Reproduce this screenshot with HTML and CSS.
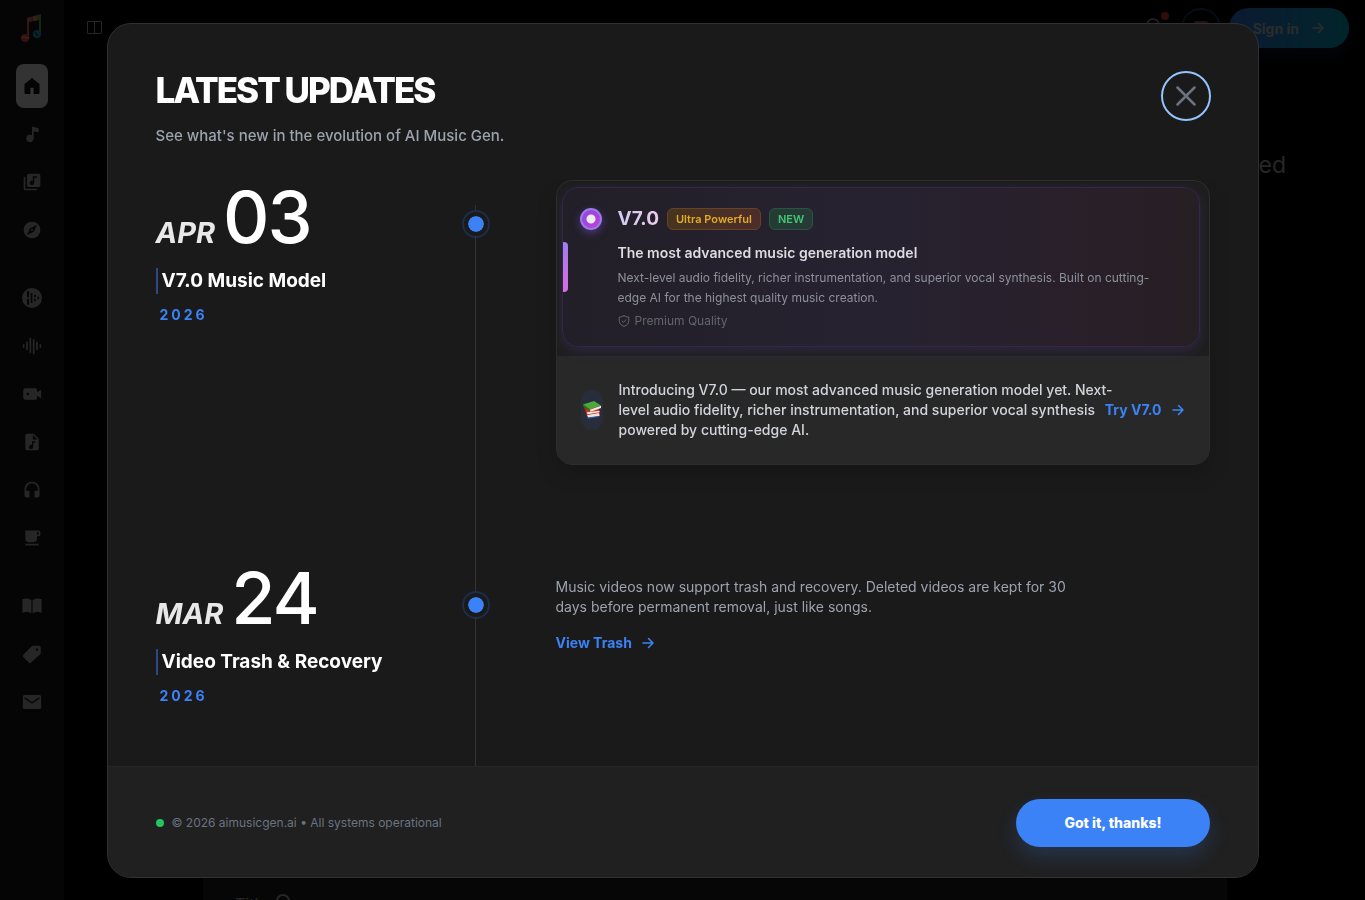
FILE: index.html
```html
<!DOCTYPE html>
<html lang="en">
<head>
    <meta charset="UTF-8">
    <meta name="viewport" content="width=device-width, initial-scale=1.0">
    <title>AI Music Gen</title>
    <link rel="stylesheet" href="styles.css">
</head>
<body>
    <div class="page">
        <nav class="sidebar" aria-label="Main">
            <a href="#" class="logo" aria-label="AI Music Gen">
                <svg width="24" height="32" viewBox="0 0 24 32">
                    <defs>
                        <linearGradient id="logo-fill" x1="0" y1="0.6" x2="1" y2="0.5">
                            <stop offset="0" stop-color="#ff4a9a"/>
                            <stop offset="0.2" stop-color="#ffa040"/>
                            <stop offset="0.4" stop-color="#e040b0"/>
                            <stop offset="0.6" stop-color="#d8e830"/>
                            <stop offset="0.8" stop-color="#ff8030"/>
                            <stop offset="1" stop-color="#30d890"/>
                        </linearGradient>
                    </defs>
                    <path d="M7 6l14-4v20h-2V8L9 10v15H7z" fill="url(#logo-fill)"/>
                    <circle cx="5" cy="26" r="4" fill="#ff5070"/>
                    <path d="M2 26c2-3 5 2 7-1" stroke="#ffc040" stroke-width="1.500" fill="none"/>
                    <circle cx="17" cy="22" r="4" fill="#24b4e0"/>
                    <path d="M15 20l3 4" stroke="#0a4a60" stroke-width="1.500"/>
                </svg>
            </a>
            <div class="nav-group">
                <a href="#" class="nav-item active" aria-label="Home"><svg viewBox="0 0 24 24"><path d="M12 2.500L3 9.500V20a1.500 1.500 0 0 0 1.500 1.500H10V14h4v7.500h5.500A1.500 1.500 0 0 0 21 20V9.500z"/></svg></a>
                <a href="#" class="nav-item" aria-label="Create"><svg viewBox="0 0 24 24"><path d="M12 3v10.600A4.500 4.500 0 1 0 14 17.400V9l6 1V5z"/></svg></a>
                <a href="#" class="nav-item" aria-label="Library"><svg viewBox="0 0 24 24"><path d="M8 2h12a2 2 0 0 1 2 2v12a2 2 0 0 1-2 2H8a2 2 0 0 1-2-2V4a2 2 0 0 1 2-2zm5 3v5.600A2.600 2.600 0 1 0 14.600 13V7H18V5zM2 6h2v14h14v2H4a2 2 0 0 1-2-2z" fill-rule="evenodd"/></svg></a>
                <a href="#" class="nav-item" aria-label="Explore"><svg viewBox="0 0 24 24"><path d="M12 2a10 10 0 1 0 0 20 10 10 0 0 0 0-20zm2.200 12.200L6 18l3.800-8.200L18 6zM12 10.900a1.100 1.100 0 1 0 0 2.200 1.100 1.100 0 0 0 0-2.200z" fill-rule="evenodd"/></svg></a>
            </div>
            <div class="nav-group">
                <a href="#" class="nav-item" aria-label="Mashup"><svg viewBox="0 0 24 24"><path fill-rule="evenodd" d="M12 0a12 12 0 1 0 0 24 12 12 0 0 0 0-24zM6 4h2.500v7H6zm0 9h2.500v7H6zM10.500 6h2v12h-2zm4 2h2v3h-2zm0 5h2v3h-2zm4-2.500h2v3h-2z"/></svg></a>
                <a href="#" class="nav-item" aria-label="Voices"><svg viewBox="0 0 24 24"><path d="M1 10h2v4H1zM5 7h2v10H5zM9 2h2v18H9zM13 4h2v18h-2zM17 7h2v10h-2zM21 10h2v4h-2z"/></svg></a>
                <a href="#" class="nav-item" aria-label="Video"><svg viewBox="0 0 24 24"><path fill-rule="evenodd" d="M4 5h12a2 2 0 0 1 2 2v3l5-3v10l-5-3v3a2 2 0 0 1-2 2H4a2.500 2.500 0 0 1-2.500-2.500v-9A2.500 2.500 0 0 1 4 5zm3 5.500a1.500 1.500 0 1 0 0 3 1.500 1.500 0 0 0 0-3z"/></svg></a>
                <a href="#" class="nav-item" aria-label="Lyrics"><svg viewBox="0 0 24 24"><path fill-rule="evenodd" d="M6 2h8l6 6v12a2 2 0 0 1-2 2H6a2 2 0 0 1-2-2V4a2 2 0 0 1 2-2zm7 1.500V9h5.500zM12 11v4.700A2.500 2.500 0 1 0 13.500 18v-5H16v-2z"/></svg></a>
                <a href="#" class="nav-item" aria-label="Listen"><svg viewBox="0 0 24 24"><path d="M12 2a9 9 0 0 0-9 9v8a2 2 0 0 0 2 2h4v-8H5v-2a7 7 0 0 1 14 0v2h-4v8h4a2 2 0 0 0 2-2v-8a9 9 0 0 0-9-9z"/></svg></a>
                <a href="#" class="nav-item" aria-label="Support us"><svg viewBox="0 0 24 24"><path fill-rule="evenodd" d="M4 3h16a2 2 0 0 1 2 2v3a2 2 0 0 1-2 2h-2v3a4 4 0 0 1-4 4H8a4 4 0 0 1-4-4zm14 2v3h2V5zM4 19h16v2H4z"/></svg></a>
            </div>
            <div class="nav-group">
                <a href="#" class="nav-item" aria-label="Blog"><svg viewBox="0 0 24 24"><path d="M.5 4C4 2.500 8 3 11.300 5v16C8 19 4 19 .5 20zM23.500 4C20 2.500 16 3 12.700 5v16c3.300-2 7.300-2 10.800-1z"/></svg></a>
                <a href="#" class="nav-item" aria-label="Pricing"><svg viewBox="0 0 24 24"><path fill-rule="evenodd" d="M13 2h7a2.500 2.500 0 0 1 2.500 2.500V11a2 2 0 0 1-.6 1.400L11 22.300a2 2 0 0 1-2.800 0l-6.500-6.500a2 2 0 0 1 0-2.800L11.600 2.600A2 2 0 0 1 13 2zm5 3a1.500 1.500 0 1 0 0 3 1.500 1.500 0 0 0 0-3z"/></svg></a>
                <a href="#" class="nav-item" aria-label="Contact"><svg viewBox="0 0 24 24"><path fill-rule="evenodd" d="M3 3.500h18a2 2 0 0 1 2 2v13a2 2 0 0 1-2 2H3a2 2 0 0 1-2-2v-13a2 2 0 0 1 2-2zm0 2.500v2l9 6 9-6V6l-9 6z"/></svg></a>
            </div>
        </nav>

        <div class="content">
            <header class="topbar">
                <button class="icon-btn" aria-label="Toggle sidebar">
                    <svg width="16" height="14" viewBox="0 0 16 14" fill="none" stroke="currentColor"><rect x="0.500" y="0.500" width="14" height="12" rx="0.500"/><path d="M7.500 0.500v12"/></svg>
                </button>
                <div class="topbar-right">
                    <button class="icon-btn bell" aria-label="Notifications">
                        <svg width="20" height="20" viewBox="0 0 20 20" fill="none" stroke="currentColor" stroke-width="1.500"><path d="M4 14V7a6 6 0 0 1 12 0v7zM8 17h4"/></svg>
                        <span class="bell-dot"></span>
                    </button>
                    <button class="avatar" aria-label="Account"><span></span></button>
                    <a href="#" class="signin">Sign in
                        <svg width="14" height="14" viewBox="0 0 14 14" fill="none" stroke="currentColor" stroke-width="1.500" stroke-linecap="round"><path d="M2 7h10M7.500 2.500L12 7l-4.500 4.500"/></svg>
                    </a>
                </div>
            </header>
            <p class="tagline">ted</p>
            <section class="form-card">
                <span>Title</span>
                <svg width="14" height="14" viewBox="0 0 14 14" fill="none" stroke="currentColor" stroke-width="2"><circle cx="7" cy="7" r="6"/></svg>
            </section>
        </div>
    </div>

    <div class="overlay">
        <div class="modal" role="dialog" aria-modal="true" aria-labelledby="modal-title">
            <header class="modal-header">
                <div>
                    <h1 id="modal-title">LATEST UPDATES</h1>
                    <p>See what's new in the evolution of AI Music Gen.</p>
                </div>
                <button class="close-btn" aria-label="Close">
                    <svg width="20" height="20" viewBox="0 0 20 20" fill="none" stroke="currentColor" stroke-width="2.500" stroke-linecap="round"><path d="M1.500 1.500l17 17M18.500 1.500l-17 17"/></svg>
                </button>
            </header>

            <div class="timeline">
                <article class="entry">
                    <div class="entry-info">
                        <div class="date"><span class="month">APR</span><span class="day">03</span></div>
                        <h2>V7.0 Music Model</h2>
                        <p class="year">2026</p>
                    </div>
                    <div class="marker first"><span class="dot"></span></div>
                    <div class="entry-body">
                        <div class="card">
                            <div class="card-top">
                                <div class="model">
                                    <span class="model-bar"></span>
                                    <span class="model-icon"></span>
                                    <div class="model-text">
                                        <div class="model-title">
                                            <span class="model-name">V7.0</span>
                                            <span class="tag tag-power">Ultra Powerful</span>
                                            <span class="tag tag-new">NEW</span>
                                        </div>
                                        <h3>The most advanced music generation model</h3>
                                        <p class="model-desc">Next-level audio fidelity, richer instrumentation, and superior vocal synthesis. Built on cutting-edge AI for the highest quality music creation.</p>
                                        <p class="quality">
                                            <svg width="12" height="12" viewBox="0 0 12 12" fill="none" stroke="currentColor" stroke-linecap="round" stroke-linejoin="round"><path d="M6 .7C4.500 1.700 3 2 1.200 2v3.500C1.200 8.500 3 10.500 6 11.400c3-.9 4.800-2.900 4.800-5.900V2C9 2 7.500 1.700 6 .7zM4 6l1.400 1.400L8 4.700"/></svg>
                                            Premium Quality
                                        </p>
                                    </div>
                                </div>
                            </div>
                            <div class="card-bottom">
                                <span class="books">
                                    <svg width="20" height="20" viewBox="0 0 20 20">
                                        <path d="M2 8l3 8 1 2 12-2v-3L15 6z" fill="#b81c14"/>
                                        <path d="M5 15l12-2 .5 3L6.500 18z" fill="#e8e4de"/>
                                        <path d="M5 17.500l12-1.500.3 1L6 18.800z" fill="#235a9c"/>
                                        <path d="M3.500 10l13-1.500 1 3.500-12 2z" fill="#e4291c"/>
                                        <path d="M4.500 12.500l13-1.700v1.500l-12 2z" fill="#f3efe8"/>
                                        <path d="M1 4.500L12 1l7 4.500L8 9.500z" fill="#4ea83c"/>
                                        <path d="M1 4.500L8 9.500v2.200L1.500 7z" fill="#2b7226"/>
                                        <path d="M8 9.700l11-4v2.300L8.500 11.700z" fill="#f0efe6"/>
                                    </svg>
                                </span>
                                <p>Introducing V7.0 — our most advanced music generation model yet. Next-level audio fidelity, richer instrumentation, and superior vocal synthesis powered by cutting-edge AI.</p>
                                <a href="#" class="more">Try V7.0
                                    <svg width="14" height="14" viewBox="0 0 14 14" fill="none" stroke="currentColor" stroke-width="1.500" stroke-linecap="round" stroke-linejoin="round"><path d="M2 7h10M7.500 2.500L12 7l-4.500 4.500"/></svg>
                                </a>
                            </div>
                        </div>
                    </div>
                </article>

                <article class="entry">
                    <div class="entry-info">
                        <div class="date"><span class="month">MAR</span><span class="day">24</span></div>
                        <h2>Video Trash &amp; Recovery</h2>
                        <p class="year">2026</p>
                    </div>
                    <div class="marker"><span class="dot"></span></div>
                    <div class="entry-body">
                        <p class="note">Music videos now support trash and recovery. Deleted videos are kept for 30 days before permanent removal, just like songs.</p>
                        <a href="#" class="more">View Trash
                            <svg width="14" height="14" viewBox="0 0 14 14" fill="none" stroke="currentColor" stroke-width="1.500" stroke-linecap="round" stroke-linejoin="round"><path d="M2 7h10M7.500 2.500L12 7l-4.500 4.500"/></svg>
                        </a>
                    </div>
                </article>
            </div>

            <footer class="modal-footer">
                <p><span class="status"></span>© 2026 aimusicgen.ai • All systems operational</p>
                <button class="ok-btn">Got it, thanks!</button>
            </footer>
        </div>
    </div>
</body>
</html>
```
FILE: styles.css
```css
* {
    box-sizing: border-box;
    margin: 0;
    padding: 0;
}

body {
    font-family: Inter, "Noto Sans", sans-serif;
    background-color: #000;
    color: #fff;
    overflow: hidden;
}

a {
    text-decoration: none;
    color: inherit;
}

button {
    font-family: inherit;
    border: none;
    background: none;
    color: inherit;
    cursor: pointer;
}

svg {
    display: block;
    flex-shrink: 0;
}

/* page behind the dialog */
.page {
    display: flex;
    height: 100vh;
}

.sidebar {
    width: 64px;
    background-color: #191919;
    padding: 12px 16px;
    display: flex;
    flex-direction: column;
    align-items: center;
}

.logo {
    height: 32px;
}

.nav-group {
    display: flex;
    flex-direction: column;
    gap: 4px;
    margin-top: 24px;
    color: #bebebe;
}

.logo + .nav-group {
    margin-top: 20px;
}

.nav-item {
    width: 32px;
    height: 44px;
    border-radius: 8px;
    display: flex;
    align-items: center;
    justify-content: center;
}

.nav-item svg {
    width: 20px;
    height: 20px;
    fill: currentColor;
}

.nav-item.active {
    background-color: #fff;
    color: #141414;
}

.content {
    flex: 1;
    display: flex;
    flex-direction: column;
}

.topbar {
    display: flex;
    justify-content: space-between;
    align-items: center;
    height: 56px;
    padding: 0 16px 0 23px;
}

.icon-btn {
    color: #bebebe;
}

.topbar-right {
    display: flex;
    align-items: center;
    gap: 8px;
}

.bell {
    position: relative;
    width: 40px;
    display: flex;
    justify-content: center;
}

.bell-dot {
    position: absolute;
    top: -6px;
    right: 4px;
    width: 8px;
    height: 8px;
    border-radius: 50%;
    background-color: #ef4444;
}

.avatar {
    width: 40px;
    height: 40px;
    border: 2px solid #1e3a6e;
    border-radius: 50%;
    display: flex;
    align-items: center;
    justify-content: center;
}

.avatar span {
    width: 16px;
    height: 14px;
    border-radius: 4px;
    background-color: #b0506a;
}

.signin {
    display: flex;
    align-items: center;
    gap: 12px;
    height: 40px;
    padding: 0 24px;
    border-radius: 20px;
    background: linear-gradient(to right, #3b82f6, #06b6d4);
    box-shadow: 0 8px 16px rgba(59, 130, 246, 0.2);
    font-size: 14px;
    font-weight: 700;
    color: #d8d8d8;
}

.tagline {
    margin-top: 94px;
    padding-right: 79px;
    text-align: right;
    font-size: 23px;
    line-height: 30px;
    color: #bebebe;
}

.form-card {
    margin: auto 138px 0 139px;
    height: 40px;
    padding: 34px 32px 0;
    background-color: #1e1e1e;
    overflow: hidden;
    display: flex;
    gap: 8px;
    font-size: 16px;
    color: #bebebe;
}

/* dialog */
.overlay {
    position: fixed;
    inset: 0;
    display: flex;
    align-items: center;
    justify-content: center;
    background-color: rgba(0, 0, 0, 0.8);
}

.modal {
    width: 90%;
    max-width: 1152px;
    height: 95vh;
    display: flex;
    flex-direction: column;
    background-color: #1a1a1a;
    border: 1px solid #303030;
    border-radius: 24px;
    overflow: hidden;
}

.modal-header {
    display: flex;
    justify-content: space-between;
    align-items: flex-start;
    padding: 47px 47px 32px 48px;
}

.modal-header h1 {
    font-size: 35px;
    line-height: 38px;
    font-weight: 800;
    letter-spacing: -2px;
}

.modal-header p {
    margin-top: 15px;
    font-size: 15px;
    line-height: 24px;
    font-weight: 500;
    color: #9ca3af;
}

.close-btn {
    width: 50px;
    height: 50px;
    border: 2px solid #93c5fd;
    border-radius: 50%;
    display: flex;
    align-items: center;
    justify-content: center;
    color: #6b7280;
}

.timeline {
    flex: 1;
    min-height: 0;
    padding: 0 48px;
    overflow: hidden;
    display: flex;
    flex-direction: column;
}

.entry {
    display: grid;
    grid-template-columns: 306px 28px 1fr;
}

.entry:last-child {
    flex: 1;
}

.entry-info {
    padding-top: 1px;
}

.entry-body {
    padding: 0 0 96px 66px;
}

.date {
    display: flex;
    align-items: baseline;
    gap: 8px;
}

.month {
    font-size: 29px;
    font-weight: 700;
    font-style: italic;
    color: #e8e8e8;
}

.day {
    font-size: 72px;
    line-height: 72px;
    font-weight: 500;
    letter-spacing: -2px;
}

.entry h2 {
    margin-top: 15px;
    padding-left: 4px;
    border-left: 2px solid #2a4a85;
    font-size: 19px;
    line-height: 26px;
    font-weight: 700;
}

.year {
    margin: 11px 0 0 4px;
    font-size: 14px;
    line-height: 20px;
    font-weight: 700;
    letter-spacing: 3px;
    color: #3b82f6;
}

.marker {
    display: flex;
    flex-direction: column;
    align-items: center;
}

.marker::before,
.marker::after {
    content: "";
    width: 1px;
    height: 32px;
    background-color: #333;
}

.marker::after {
    flex: 1;
}

.marker.first {
    padding-top: 25px;
}

.marker.first::before {
    height: 7px;
}

.dot {
    width: 24px;
    height: 24px;
    border: 4px solid #1a1a1a;
    border-radius: 50%;
    background-color: #3b82f6;
    background-clip: padding-box;
    box-shadow: 0 0 0 2px #1d2d48;
}

.card {
    border: 1px solid #2d2d2d;
    border-radius: 16px;
    background-color: #1e1e1e;
    box-shadow: 0 10px 20px rgba(0, 0, 0, 0.15);
    overflow: hidden;
}

.card-top {
    padding: 6px 9px 9px 5px;
}

.model {
    position: relative;
    display: flex;
    gap: 16px;
    padding: 20px 24px 15px 17px;
    border: 1px solid #33264f;
    border-radius: 16px;
    background: linear-gradient(to right, #221f28, #272230 50%, #291f29 85%, #261f23);
    box-shadow: 0 4px 12px rgba(139, 92, 246, 0.15);
}

.model-bar {
    position: absolute;
    left: 0;
    top: 54px;
    width: 5px;
    height: 50px;
    border-radius: 0 4px 4px 0;
    background: linear-gradient(#a07cf0, #d66ee0);
}

.model-icon {
    flex-shrink: 0;
    width: 22px;
    height: 22px;
    border: 2px solid #9a7bea;
    border-radius: 50%;
    background: radial-gradient(circle, #ececec 4px, transparent 5px), linear-gradient(135deg, #8b4be0, #c33bd8);
    box-shadow: 0 3px 8px rgba(139, 92, 246, 0.4);
}

.model-text {
    flex: 1;
}

.model-title {
    display: flex;
    align-items: center;
    gap: 8px;
    height: 22px;
}

.model-name {
    font-size: 19px;
    font-weight: 700;
    background: linear-gradient(to right, #d0ccf2, #ecc8ea);
    background-clip: text;
    -webkit-background-clip: text;
    color: transparent;
}

.tag {
    height: 22px;
    padding: 0 8px;
    border: 1px solid;
    border-radius: 6px;
    font-size: 11px;
    line-height: 20px;
    font-weight: 600;
}

.tag-power {
    background: linear-gradient(to right, #46341f, #4c2c2c);
    border-color: #664420;
    color: #e3ab25;
}

.tag-new {
    background: linear-gradient(to right, #243c33, #263a38);
    border-color: #265540;
    color: #42c574;
}

.model h3 {
    margin-top: 13px;
    font-size: 14px;
    line-height: 20px;
    font-weight: 600;
    color: #dcdcde;
}

.model-desc {
    margin-top: 5px;
    font-size: 12px;
    line-height: 20px;
    color: #8c909b;
}

.quality {
    display: flex;
    align-items: center;
    gap: 5px;
    margin-top: 3px;
    font-size: 12px;
    line-height: 20px;
    color: #626570;
}

.card-bottom {
    display: flex;
    align-items: center;
    gap: 16px;
    padding: 24px;
    background-color: #282828;
}

.books {
    width: 22px;
    height: 40px;
    border-radius: 11px;
    background-color: #272d3a;
    display: flex;
    align-items: center;
    justify-content: center;
    flex-shrink: 0;
}

/* the link sits close to the text */
.card-bottom p {
    flex: 1;
    margin-right: -24px;
    font-size: 14px;
    line-height: 20px;
    font-weight: 500;
    color: #d1d5db;
}

.more {
    display: inline-flex;
    align-items: center;
    gap: 9px;
    font-size: 14px;
    line-height: 20px;
    font-weight: 700;
    color: #3b82f6;
    white-space: nowrap;
}

.note {
    max-width: 512px;
    margin: 16px 0 15px;
    font-size: 14px;
    line-height: 20px;
    color: #9ca3af;
}

.modal-footer {
    display: flex;
    justify-content: space-between;
    align-items: center;
    padding: 32px 48px 30px;
    border-top: 1px solid #262626;
    background-color: #202020;
}

.modal-footer p {
    display: flex;
    align-items: center;
    gap: 8px;
    font-size: 12px;
    line-height: 16px;
    color: #6b7280;
}

.status {
    width: 8px;
    height: 8px;
    border-radius: 50%;
    background-color: #22c55e;
}

.ok-btn {
    height: 48px;
    padding: 0 48px;
    border-radius: 24px;
    background-color: #3b82f6;
    box-shadow: 0 10px 20px rgba(59, 130, 246, 0.2);
    font-size: 14px;
    font-weight: 800;
}
```
